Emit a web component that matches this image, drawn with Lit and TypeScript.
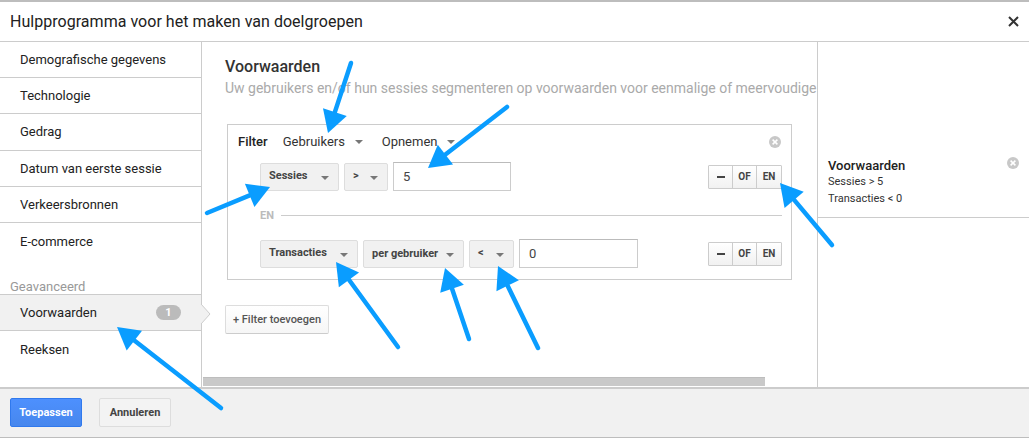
import { LitElement, html, css, svg } from "lit";
import { customElement } from "lit/decorators.js";

const arrows: [number, number, number, number][] = [
  [351, 63, 328, 133],
  [507, 107, 428, 168],
  [207, 213, 270, 187],
  [832, 245, 780, 183],
  [398, 347, 336, 262],
  [469, 339, 445, 268],
  [538, 348, 498, 266],
  [221, 408, 117, 327],
];

function arrow([x1, y1, x2, y2]: [number, number, number, number]) {
  const d = Math.hypot(x2 - x1, y2 - y1);
  const ux = (x2 - x1) / d, uy = (y2 - y1) / d;
  const bx = x2 - ux * 22, by = y2 - uy * 22;
  const hw = 12.5;
  const pts = `${x2},${y2} ${bx - uy * hw},${by + ux * hw} ${bx + uy * hw},${by - ux * hw}`;
  return svg`<line x1=${x1} y1=${y1} x2=${bx} y2=${by} stroke="#0a9dff" stroke-width="4.5" stroke-linecap="round"></line><polygon points=${pts} fill="#0a9dff"></polygon>`;
}

const clearIcon = html`<svg class="clear" width="12" height="12" viewBox="0 0 12 12"><circle cx="6" cy="6" r="6" fill="#c8c8c8"></circle><path d="M3.6 3.6l4.8 4.8M8.4 3.6l-4.8 4.8" stroke="#fff" stroke-width="1.5"></path></svg>`;

@customElement("app-root")
export class AppRoot extends LitElement {
  static styles = css`
    :host { display: block; width: 1029px; height: 439px; position: relative; overflow: hidden; background: #fff; font-family: Roboto, sans-serif; color: #222; }
    * { box-sizing: border-box; }
    .dialog { height: 438px; border-top: 2px solid #bdbdbd; border-bottom: 1px solid #bdbdbd; display: flex; flex-direction: column; }
    .head { height: 40px; flex: none; border-bottom: 1px solid #ccc; display: flex; align-items: center; justify-content: space-between; padding: 0 10px; font-size: 16px; letter-spacing: 0.03px; color: #212121; }
    .head svg { display: block; }
    .body { flex: 1; min-height: 0; display: flex; }
    .side { width: 202px; flex: none; border-right: 1px solid #ccc; display: flex; flex-direction: column; position: relative; }
    .item { height: 36.2px; flex: none; border-bottom: 1px solid #ccc; padding-left: 20px; display: flex; align-items: center; font-size: 13px; color: #222; }
    .item.plain { border-bottom: none; }
    .label { margin-top: 20px; height: 15px; padding-left: 10px; font-size: 13px; color: #999; display: flex; align-items: center; }
    .item.active { background: #f1f1f1; border-top: 1px solid #ccc; height: 37px; padding-right: 20px; justify-content: space-between; width: 201px; position: relative; }
    .badge { width: 25px; height: 15px; border-radius: 8px; background: #bbb; color: #fff; font-size: 11px; font-weight: 700; display: flex; align-items: center; justify-content: center; }
    .notch { position: absolute; left: 200px; top: 9px; }
    .main { width: 615px; flex: none; display: flex; flex-direction: column; position: relative; overflow: hidden; }
    .content { flex: 1; padding: 15px 0 0 23px; min-height: 0; white-space: nowrap; }
    h2 { margin: 0; font-size: 16px; font-weight: 500; line-height: 19px; color: #333; }
    .sub { font-size: 14px; line-height: 19px; color: #aaa; margin-top: 3px; letter-spacing: 0; }
    .filter { width: 565px; height: 156px; margin: 26px 0 0 2px; border: 1px solid #ccc; padding: 8px 9px 0 10px; }
    .fhead { display: flex; align-items: center; height: 17px; font-size: 13px; color: #333; }
    .fhead b { font-weight: 500; color: #222; margin-right: 15px; }
    .menu { display: flex; align-items: center; }
    .menu.first { width: 99px; }
    .caret { width: 0; height: 0; border-left: 4px solid transparent; border-right: 4px solid transparent; border-top: 4px solid #777; display: block; }
    .menu .caret { margin-left: 10px; margin-top: 1px; }
    .fhead .clear { margin-left: auto; margin-right: 1px; }
    .row { display: flex; align-items: center; margin-left: 22px; height: 29px; gap: 5px; }
    .row.one { margin-top: 12px; }
    .sel { height: 28px; background: #f1f1f1; border: 1px solid #ddd; border-radius: 2px; display: flex; align-items: center; justify-content: space-between; padding: 0 9px 0 8px; font-size: 11px; font-weight: 700; color: #444; }
    .sel span { position: relative; top: -1px; }
    .sel .caret { margin-top: 2px; }
    .sel.mid span { top: 0; }
    .input { height: 29px; border: 1px solid #ccc; border-top-color: #bbb; background: #fff; font-size: 13px; color: #444; display: flex; align-items: center; padding-left: 9px; }
    .group { margin-left: auto; display: flex; height: 24px; border: 1px solid #ccc; border-radius: 1px; }
    .group div { width: 24px; display: flex; align-items: center; justify-content: center; font-size: 10px; font-weight: 700; color: #444; background: linear-gradient(#fff, #f1f1f1); border-right: 1px solid #ccc; }
    .group div:last-child { border-right: none; }
    .group i { display: block; width: 8px; height: 2px; background: #444; }
    .sep { display: flex; align-items: center; margin: 16px 0 15px 22px; height: 17px; gap: 7px; font-size: 11px; font-weight: 700; color: #bbb; }
    .sep hr { flex: 1; border: 0; border-top: 1px solid #ccc; margin: 0; }
    .add { margin-top: 25px; width: 104px; height: 29px; border: 1px solid #ddd; border-bottom-color: #ccc; border-radius: 2px; background: linear-gradient(#fff, #f6f6f6); font-size: 11px; font-weight: 500; color: #555; display: flex; align-items: center; justify-content: center; }
    .track { flex: none; height: 10px; margin-left: 1px; }
    .thumb { width: 562px; height: 9px; background: #c9c9c9; border-top: 1px solid #bdbdbd; }
    .right { flex: 1; border-left: 1px solid #ccc; display: flex; flex-direction: column; }
    .summary { margin-top: 104px; height: 72px; border-bottom: 1px solid #ccc; padding: 12px 10px 0 10px; position: relative; font-size: 11px; color: #333; line-height: 17px; }
    .summary strong { display: block; font-size: 13px; font-weight: 500; color: #222; line-height: 15px; }
    .summary .clear { position: absolute; right: 10px; top: 11px; }
    .foot { height: 50px; flex: none; background: #f1f1f1; border-top: 2px solid #ccc; display: flex; align-items: center; padding: 0 0 1px 10px; gap: 17px; }
    .btn { height: 29px; border-radius: 2px; font-size: 11px; font-weight: 700; display: flex; align-items: center; justify-content: center; }
    .apply { width: 72px; border: 1px solid #3079ed; color: #fff; background: linear-gradient(#4d90fe, #4787ed); }
    .cancel { width: 72px; background: #f3f3f3; border: 1px solid #ddd; color: #444; }
    .overlay { position: absolute; left: 0; top: 0; pointer-events: none; }
  `;

  render() {
    return html`
      <div class="dialog">
        <div class="head">
          <span>Hulpprogramma voor het maken van doelgroepen</span>
          <svg width="11" height="11" viewBox="0 0 11 11"><path d="M1 1l9 9M10 1l-9 9" stroke="#333" stroke-width="2"></path></svg>
        </div>
        <div class="body">
          <div class="side">
            ${["Demografische gegevens", "Technologie", "Gedrag", "Datum van eerste sessie", "Verkeersbronnen"].map((t) => html`<div class="item">${t}</div>`)}
            <div class="item plain">E-commerce</div>
            <div class="label">Geavanceerd</div>
            <div class="item active">
              <span>Voorwaarden</span><span class="badge">1</span>
              <svg class="notch" width="12" height="20" viewBox="0 0 12 20"><path d="M1 0l9 10-9 10" fill="#f1f1f1" stroke="#ccc"></path></svg>
            </div>
            <div class="item plain">Reeksen</div>
          </div>
          <div class="main">
            <div class="content">
              <h2>Voorwaarden</h2>
              <div class="sub">Uw gebruikers en/of hun sessies segmenteren op voorwaarden voor eenmalige of meervoudige</div>
              <div class="filter">
                <div class="fhead">
                  <b>Filter</b>
                  <span class="menu first">Gebruikers<i class="caret"></i></span>
                  <span class="menu">Opnemen<i class="caret"></i></span>
                  ${clearIcon}
                </div>
                <div class="row one">
                  <div class="sel" style="width:79px"><span>Sessies</span><i class="caret"></i></div>
                  <div class="sel" style="width:44px"><span>&gt;</span><i class="caret"></i></div>
                  <div class="input" style="width:118px">5</div>
                  <div class="group"><div><i></i></div><div>OF</div><div>EN</div></div>
                </div>
                <div class="sep"><span>EN</span><hr /></div>
                <div class="row two">
                  <div class="sel" style="width:98px"><span>Transacties</span><i class="caret"></i></div>
                  <div class="sel mid" style="width:101px"><span>per gebruiker</span><i class="caret"></i></div>
                  <div class="sel" style="width:45px"><span>&lt;</span><i class="caret"></i></div>
                  <div class="input" style="width:119px">0</div>
                  <div class="group"><div><i></i></div><div>OF</div><div>EN</div></div>
                </div>
              </div>
              <div class="add">+ Filter toevoegen</div>
            </div>
            <div class="track"><div class="thumb"></div></div>
          </div>
          <div class="right">
            <div class="summary">
              <strong>Voorwaarden</strong>
              <div>Sessies &gt; 5</div>
              <div>Transacties &lt; 0</div>
              ${clearIcon}
            </div>
          </div>
        </div>
        <div class="foot">
          <div class="btn apply">Toepassen</div>
          <div class="btn cancel">Annuleren</div>
        </div>
      </div>
      <svg class="overlay" width="1029" height="439">${arrows.map(arrow)}</svg>
    `;
  }
}
